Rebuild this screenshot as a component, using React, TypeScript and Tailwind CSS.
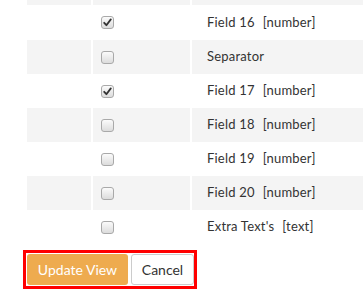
import React from "react";

type Row = { label: string; type?: string; checked?: boolean };

const rows: Row[] = [
  { label: "Field 16", type: "[number]", checked: true },
  { label: "Separator" },
  { label: "Field 17", type: "[number]", checked: true },
  { label: "Field 18", type: "[number]" },
  { label: "Field 19", type: "[number]" },
  { label: "Field 20", type: "[number]" },
  { label: "Extra Text's", type: "[text]" },
];

function Check({ checked }: { checked?: boolean }) {
  return (
    <span className="flex h-[13px] w-[13px] items-center justify-center rounded-[3px] border border-[#a9a9a9] bg-gradient-to-b from-[#fbfbfb] to-[#dcdcdc]">
      {checked && (
        <svg width="9" height="9" viewBox="0 0 9 9">
          <path d="M1.2 4.8 L3.4 7.2 L7.8 1.4" fill="none" stroke="#333" strokeWidth="1.8" strokeLinecap="round" strokeLinejoin="round" />
        </svg>
      )}
    </span>
  );
}

export default function App() {
  return (
    <div className="h-[296px] w-[363px] overflow-hidden bg-white font-['Lato','Open_Sans',sans-serif] text-[13px] text-[#333]">
      <div className="pl-[27px]">
        {/* last bit of the row above */}
        <div className="flex h-[5px] bg-[#f4f4f4]">
          <div className="w-[66px] border-r-2 border-white" />
          <div className="w-[99px] border-r-2 border-white" />
          <div className="flex-1" />
        </div>
        {rows.map((r, i) => (
          <div
            key={r.label}
            className={`flex ${i === 0 ? "h-[35px]" : "h-[34px]"} items-center ${i % 2 === 1 ? "bg-[#f4f4f4]" : "bg-white"}`}>
            <div className="h-full w-[66px] border-r-2 border-white" />
            <div className="flex h-full w-[99px] items-center border-r-2 border-white pl-[8px]">
              <Check checked={r.checked} />
            </div>
            <div className="flex h-full flex-1 items-center pl-[15px] tracking-[0.2px]">
              <span>{r.label}</span>
              {r.type && <span className="ml-[8px]">{r.type}</span>}
            </div>
          </div>
        ))}
      </div>
      <div className="ml-[23px] mt-[6px] inline-flex gap-[3px] border-[3px] border-[#ff0000] py-[1px] pl-[1px]">
        <button className="h-[31px] w-[101px] rounded-[3px] bg-[#eeab4f] text-[14px] text-white">
          Update View
        </button>
        <button className="h-[31px] w-[63px] rounded-[3px] border border-[#cccccc] bg-white text-[14px] text-[#333]">
          Cancel
        </button>
      </div>
    </div>
  );
}
